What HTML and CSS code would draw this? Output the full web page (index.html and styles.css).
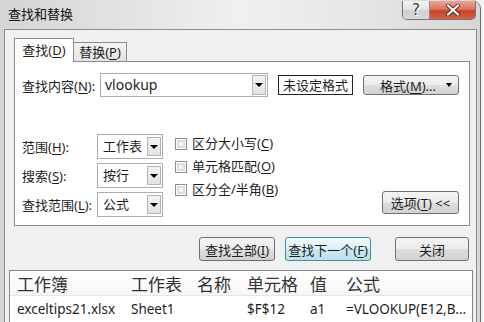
FILE: index.html
```html
<!DOCTYPE html>
<html>
	<head>
		<meta charset="utf-8">
		<title>查找和替换</title>
		<link rel="stylesheet" href="styles.css">
	</head>
	<body>
		<div class="window">
			<div class="titlebar">
				<span class="title">查找和替换</span>
				<div class="caption">
					<span class="cap help">?</span>
					<span class="cap close">
						<svg width="14" height="12" viewBox="0 0 14 12"><path d="M2 1.5L12 10.5M12 1.5L2 10.5" stroke="#5a2a20" stroke-width="4" stroke-linecap="round"/><path d="M2 1.5L12 10.5M12 1.5L2 10.5" stroke="#fff" stroke-width="2.2" stroke-linecap="round"/></svg>
					</span>
				</div>
			</div>
			<div class="client">
				<div class="tabs">
					<span class="tab active">查找(<u>D</u>)</span>
					<span class="tab">替换(<u>P</u>)</span>
				</div>
				<div class="panel">
					<div class="find-row">
						<label class="find-label">查找内容(<u>N</u>):</label>
						<div class="combo wide"><span class="value">vlookup</span><span class="arrow"></span></div>
						<span class="preview">未设定格式</span>
						<button class="btn format">格式(<u>M</u>)...<span class="tri"></span></button>
					</div>
					<div class="options">
						<div class="fields">
							<label>范围(<u>H</u>):</label>
							<div class="combo"><span class="value">工作表</span><span class="arrow"></span></div>
							<label>搜索(<u>S</u>):</label>
							<div class="combo"><span class="value">按行</span><span class="arrow"></span></div>
							<label>查找范围(<u>L</u>):</label>
							<div class="combo"><span class="value">公式</span><span class="arrow"></span></div>
						</div>
						<div class="checks">
							<div class="check"><span class="box"></span>区分大小写(<u>C</u>)</div>
							<div class="check"><span class="box"></span>单元格匹配(<u>O</u>)</div>
							<div class="check"><span class="box"></span>区分全/半角(<u>B</u>)</div>
						</div>
						<button class="btn opt">选项(<u>T</u>) &lt;&lt;</button>
					</div>
				</div>
				<div class="actions">
					<button class="btn all">查找全部(<u>I</u>)</button>
					<button class="btn next">查找下一个(<u>F</u>)</button>
					<button class="btn close-btn">关闭</button>
				</div>
				<div class="results">
					<div class="row head">
						<span class="c1">工作簿</span><span class="c2">工作表</span><span class="c3">名称</span><span class="c4">单元格</span><span class="c5">值</span><span class="c6">公式</span>
					</div>
					<div class="row">
						<span class="c1">exceltips21.xlsx</span><span class="c2">Sheet1</span><span class="c3"></span><span class="c4">$F$12</span><span class="c5">a1</span><span class="c6">=VLOOKUP(E12,B...</span>
					</div>
				</div>
			</div>
		</div>
	</body>
</html>
```
FILE: styles.css
```css
*{margin: 0;padding: 0;box-sizing: border-box;}
body{
	width: 484px;height: 322px;
	overflow: hidden;
	background: #f3f3f3;
	font-family: "Noto Sans","Noto Sans CJK SC",sans-serif;
	font-size: 13px;
	color: #1e1e1e;
}
u{text-decoration: underline;text-underline-offset: 2px;}

.window{
	width: 481px;height: 322px;
	overflow: hidden;
	background: linear-gradient(90deg,#d4d4d4,#e2e2e2 25%,#f0f0f0 50%,#e6e6e6 75%,#d6d6d6);
	border-right: 1px solid #6a6a6a;
	border-radius: 0 9px 0 0;
}
.titlebar{
	height: 29px;
	display: flex;
}
.title{
	padding-left: 8px;
	line-height: 29px;
	color: #111;
	font-size: 13px;
}
.caption{
	margin-left: auto;
	margin-top: 1px;
	margin-right: 4px;
	display: flex;
	height: 19px;
	border: 1px solid #767676;
	border-top: 0;
	border-radius: 0 0 5px 5px;
	overflow: hidden;
}
.cap{
	display: flex;
	align-items: center;
	justify-content: center;
}
.help{
	width: 27px;
	background: linear-gradient(#f2f2f2,#e4e4e4 45%,#cfcfcf 55%,#d8d8d8);
	border-right: 1px solid #8a8a8a;
	color: #3c3c3c;
	font-family: "DejaVu Sans",sans-serif;
	font-size: 15px;
	line-height: 18px;
	text-shadow: 1px 1px 0 #fff;
}
.close{
	width: 45px;
	background: linear-gradient(#eaa596,#dc7560 45%,#c8412a 55%,#d2624a);
}

.client{
	margin: 0 3px 0 4px;
	height: 293px;
	overflow: hidden;
	border: 1px solid #8e8e8e;
	border-bottom: 0;
	background: #f0f0f0;
	padding: 8px 6px 0 9px;
}
.tabs{
	display: flex;
	align-items: flex-end;
	height: 23px;
}
.tab{
	width: 53px;height: 19px;
	border: 1px solid #898c95;
	border-left: 0;
	border-bottom: 0;
	background: linear-gradient(#f3f3f3,#e3e3e3);
	text-align: center;
	line-height: 18px;
}
.tab.active{
	width: 60px;height: 24px;
	margin-bottom: -1px;
	border-left: 1px solid #898c95;
	background: #fff;
	position: relative;
	z-index: 1;
	line-height: 23px;
}
.panel{
	height: 165px;
	border: 1px solid #898c95;
	background: #fff;
	padding: 11px 10px 0 7px;
}
.find-row{
	display: flex;
	align-items: center;
	height: 24px;
}
.find-label{width: 78px;}
.combo{
	display: flex;
	height: 25px;
	border: 1px solid #abadb3;
	background: #fff;
}
.combo.wide{width: 168px;height: 24px;}
.combo .value{
	flex: 1;
	padding-left: 5px;
	line-height: 22px;
}
.combo.wide .value{padding-left: 4px;font-size: 14px;}
.arrow{
	width: 14px;
	margin: 1px;
	border: 1px solid #b4b4b4;
	background: linear-gradient(#f4f4f4,#e2e2e2);
	position: relative;
}
.arrow::after,.tri::after{
	content: "";
	position: absolute;
	left: 50%;top: 50%;
	margin: -2px 0 0 -4px;
	border: 4px solid transparent;
	border-top: 4px solid #000;
	border-bottom: 0;
}
.preview{
	margin-left: 10px;
	width: 75px;height: 20px;
	border: 1px solid #222;
	text-align: center;
	line-height: 18px;
}
.btn{
	font-family: inherit;
	font-size: 13px;
	color: #1e1e1e;
	border: 1px solid #707070;
	border-radius: 3px;
	background: linear-gradient(#f4f4f4,#ececec 48%,#dedede 52%,#d2d2d2);
}
.format{
	margin-left: 10px;
	width: 96px;height: 20px;
	position: relative;
	padding-right: 6px;
}
.tri{
	position: absolute;
	right: 4px;top: 0;
	width: 10px;height: 100%;
}
.tri::after{margin-left: -3px;border-width: 3px;border-top-width: 4px;}

.options{
	display: flex;
	margin-top: 37px;
}
.fields{
	display: grid;
	grid-template-columns: 75px 66px;
	grid-auto-rows: 25px;
	row-gap: 4px;
	align-items: center;
}
.fields .arrow{margin: 2px 1px;}
.checks{
	margin-left: 12px;
	margin-top: 3px;
	display: flex;
	flex-direction: column;
	gap: 10px;
}
.check{
	display: flex;
	align-items: center;
	height: 13px;
	line-height: 13px;
}
.box{
	width: 12px;height: 12px;
	margin-right: 5px;
	border: 1px solid #8e8f8f;
	background: #f4f4f4;
	box-shadow: inset 0 0 0 1px #fff,inset 0 0 0 3px #dcdcdc;
}
.opt{
	margin-left: auto;
	align-self: flex-end;
	margin-bottom: 3px;
	width: 77px;height: 23px;
}

.actions{
	display: flex;
	justify-content: flex-end;
	margin-top: 11px;
	padding-right: 1px;
}
.actions .btn{height: 24px;}
.all{width: 76px;}
.next{
	width: 86px;
	margin-left: 10px;
	border-color: #3c8fa0;
	background: linear-gradient(#eef8fb,#dff1f6 48%,#c9e7f0 52%,#bfe1eb);
}
.close-btn{width: 74px;margin-left: 24px;}

.results{
	margin: 9px -3px 0 -5px;
	border: 1px solid #828790;
	border-bottom: 0;
	background: #fff;
}
.row{
	display: flex;
	align-items: center;
	height: 26px;
	font-size: 13.5px;
}
.row.head{
	height: 25px;
	font-size: 17px;
	color: #333;
	background: linear-gradient(#fff,#f6f6f6);
	border-bottom: 1px solid #e6e6e6;
}
.row span{padding-left: 7px;white-space: nowrap;}
.c1{width: 114px;}
.c2{width: 66px;}
.c3{width: 50px;}
.c4{width: 63px;}
.c5{width: 36px;}
.c6{flex: 1;}
```
